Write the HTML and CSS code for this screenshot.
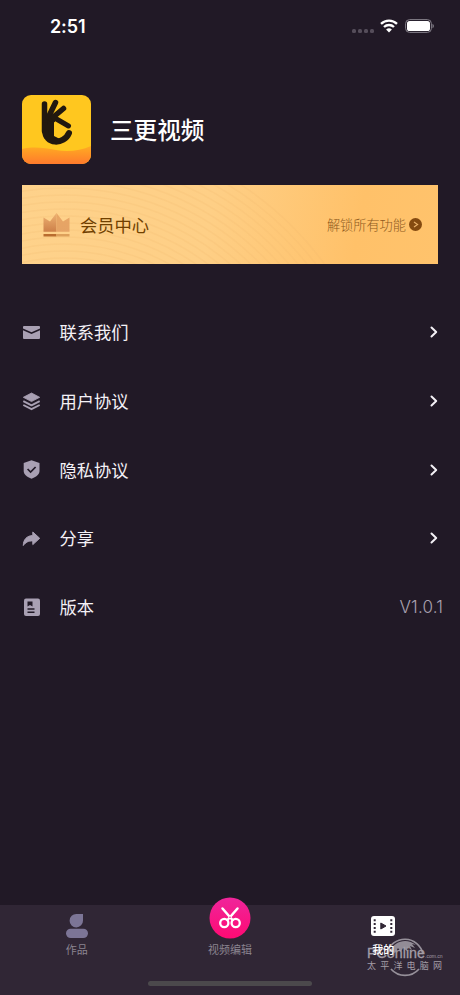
FILE: index.html
```html
<!DOCTYPE html>
<html lang="zh-CN">
<head>
<meta charset="utf-8">
<title>三更视频</title>
<link rel="stylesheet" href="styles.css">
</head>
<body>
<div class="screen">
  <header class="status">
    <span class="time">2:51</span>
    <div class="status-icons">
      <span class="dots"><i></i><i></i><i></i><i></i></span>
      <svg class="wifi" width="18" height="14" viewBox="0 0 18 14" fill="none" stroke="#fff" stroke-width="2.3"><path d="M1 4.800a11.500 11.500 0 0 1 16 0M4 8a7.200 7.200 0 0 1 10 0"/><path d="M9 13.500 6.100 10.600a4.200 4.200 0 0 1 5.800 0z" fill="#fff" stroke="none"/></svg>
      <svg width="29" height="14" viewBox="0 0 29 14"><rect x=".6" y=".6" width="25.8" height="12.8" rx="4" fill="none" stroke="#85808a"/><rect x="2" y="2" width="23" height="10" rx="2.6" fill="#fff"/><path d="M27.500 4.700c1.800.8 1.800 3.800 0 4.600z" fill="#85808a"/></svg>
    </div>
  </header>

  <section class="profile">
    <svg class="logo" width="69" height="69" viewBox="0 0 69 69">
      <defs>
        <linearGradient id="wave" x1="0" y1="0" x2="0" y2="1"><stop stop-color="#ffac22"/><stop offset="1" stop-color="#ff7a2c"/></linearGradient>
        <clipPath id="tile"><rect width="69" height="69" rx="9"/></clipPath>
      </defs>
      <g clip-path="url(#tile)">
        <rect width="69" height="69" fill="#ffc71f"/>
        <path d="M0 54C12 51 23 53 34 55s24 1 35-4v18H0z" fill="url(#wave)"/>
      </g>
      <path d="M20 20h11l3 4-2 5v12l6 3-8 4-8-5z" fill="#21180f"/>
      <g fill="none" stroke="#21180f" stroke-linecap="round" stroke-linejoin="round">
        <path d="M22.500 9V36" stroke-width="5.500"/>
        <path d="M26.500 22 33.500 7.500" stroke-width="5.500"/>
        <path d="M29 24 41.500 13.500" stroke-width="5.500"/>
        <path d="M31 22 46.500 31" stroke-width="5"/>
        <path d="M23 30V35C23 50 42 50 47 38" stroke-width="6"/>
      </g>
      <path d="M32.500 27.500v12.500l12-5.800z" fill="#ffc71f" stroke="#ffc71f" stroke-linejoin="round"/>
    </svg>
    <h1>三更视频</h1>
  </section>

  <section class="vip">
    <svg class="ripples" width="416" height="79" viewBox="0 0 416 79" fill="none" stroke="#eeb96d" stroke-opacity=".2" stroke-width="1.500">
      <circle cx="42" cy="270" r="197"/><circle cx="42" cy="270" r="204"/><circle cx="42" cy="270" r="211"/><circle cx="42" cy="270" r="218"/><circle cx="42" cy="270" r="225"/><circle cx="42" cy="270" r="232"/><circle cx="42" cy="270" r="239"/><circle cx="42" cy="270" r="246"/><circle cx="42" cy="270" r="253"/><circle cx="42" cy="270" r="260"/><circle cx="42" cy="270" r="267"/><circle cx="42" cy="270" r="274"/><circle cx="42" cy="270" r="281"/><circle cx="42" cy="270" r="288"/><circle cx="42" cy="270" r="295"/><circle cx="42" cy="270" r="302"/><circle cx="42" cy="270" r="309"/><circle cx="42" cy="270" r="316"/><circle cx="42" cy="270" r="323"/>
    </svg>
    <svg class="crown" width="27" height="26" viewBox="0 0 27 26">
      <defs><linearGradient id="cl" x1="0" y1="0" x2="0" y2="1"><stop stop-color="#eeb272"/><stop offset="1" stop-color="#cd8049"/></linearGradient><linearGradient id="cr" x1="0" y1="0" x2="0" y2="1"><stop stop-color="#e8a665"/><stop offset="1" stop-color="#e5a365"/></linearGradient></defs>
      <path d="M.5 5.500 7 9.500 13.500 1v18.800H.5z" fill="url(#cl)"/>
      <path d="M13.500 1 20 9.500l6.500-4v14.300h-13z" fill="url(#cr)"/>
      <path d="M.5 22h13v2.500H.5z" fill="#b96d2f"/><path d="M13.500 22h13v2.500h-13z" fill="#dda05b"/>
    </svg>
    <span class="vip-title">会员中心</span>
    <span class="vip-more">解锁所有功能</span>
    <svg class="vip-go" width="13" height="13" viewBox="0 0 13 13"><circle cx="6.500" cy="6.500" r="6.500" fill="#844a10"/><path d="m5 4 3.600 2.500L5 9" fill="none" stroke="#eab169" stroke-width="1.100"/></svg>
  </section>

  <nav class="menu">
    <div class="row">
      <svg width="19" height="19" viewBox="0 0 19 19" fill="#a9a0b3"><path d="M2 3h15a1 1 0 0 1 1 1v1.500L9.500 9.300 1 5.500V4a1 1 0 0 1 1-1z"/><path d="m1 7.200 8.500 3.700L18 7.200V15a1 1 0 0 1-1 1H2a1 1 0 0 1-1-1z"/></svg>
      <span>联系我们</span>
      <svg class="chev" width="8" height="12" viewBox="0 0 8 12"><path d="m1.500 1.500 4.700 4.500-4.700 4.500"/></svg>
    </div>
    <div class="row">
      <svg width="19" height="19" viewBox="0 0 19 19" fill="#a9a0b3"><path d="m9.500 1 8.200 4.300-8.200 4.300-8.200-4.300z" stroke="#a9a0b3" stroke-linejoin="round" stroke-width=".8"/><path d="m1.300 9.200 8.200 4.200 8.200-4.200M1.300 13l8.200 4.200 8.200-4.200" fill="none" stroke="#a9a0b3" stroke-width="1.900" stroke-linejoin="round"/></svg>
      <span>用户协议</span>
      <svg class="chev" width="8" height="12" viewBox="0 0 8 12"><path d="m1.500 1.500 4.700 4.500-4.700 4.500"/></svg>
    </div>
    <div class="row">
      <svg width="19" height="19" viewBox="0 0 19 19"><path d="M9.500.3 17.500 3v8c0 3.500-3.500 6-8 7.700C5 17 1.700 14.500 1.700 11V3z" fill="#a9a0b3"/><path d="m5.600 9 3 3 5-5" fill="none" stroke="#211926" stroke-width="1.700"/></svg>
      <span>隐私协议</span>
      <svg class="chev" width="8" height="12" viewBox="0 0 8 12"><path d="m1.500 1.500 4.700 4.500-4.700 4.500"/></svg>
    </div>
    <div class="row">
      <svg width="19" height="19" viewBox="0 0 19 19"><path d="M10.800 3 17.700 9.300 10.800 15.600V12C6.500 11.500 3.500 13.500 1.300 16.500 1.300 10.500 5 6.700 10.800 6.500z" fill="#a9a0b3" stroke="#a9a0b3" stroke-width="1" stroke-linejoin="round"/></svg>
      <span>分享</span>
      <svg class="chev" width="8" height="12" viewBox="0 0 8 12"><path d="m1.500 1.500 4.700 4.500-4.700 4.500"/></svg>
    </div>
    <div class="row">
      <svg width="19" height="19" viewBox="0 0 19 19"><rect x="2" y=".5" width="16" height="17.500" rx="2" fill="#a9a0b3"/><path d="M5.500 3.500h5v5L8 7 5.500 8.500zM5.500 10.300h7v1.500h-7zM5.500 13.500h7V15h-7z" fill="#211926"/></svg>
      <span>版本</span>
      <span class="version">V1.0.1</span>
    </div>
  </nav>

  <footer class="tabbar">
    <div class="watermark">
      <svg class="globe" width="40" height="40" viewBox="0 0 40 40"><path d="M2 16A18.500 18.500 0 0 1 38 17M6 32A18.500 18.500 0 0 0 34 32" fill="none" stroke="#96909a" stroke-width="1.700"/><path d="M5 14C9 5 21 0 31 8l-4-1 3 4-5-2 2 4-5-3v4l-4-3-2 4-3-4-3 5z" fill="#928c96"/></svg>
      <div class="brand">PConline<small>.com.cn</small></div>
      <div class="brand-cn">太平洋电脑网</div>
    </div>
    <div class="tabs">
      <div class="tab">
        <svg class="tab-icon" width="24" height="26" viewBox="0 0 24 26" fill="#7c7596"><path d="M11.500 1H18v6.500A6.700 6.700 0 1 1 11.500 1z"/><rect x="1" y="15.700" width="22" height="9.300" rx="4.650"/></svg>
        <span>作品</span>
      </div>
      <div class="tab">
        <svg class="tab-icon" width="42" height="42" viewBox="0 0 42 42"><defs><linearGradient id="pink" x1="0" y1="0" x2="0" y2="1"><stop stop-color="#ef259b"/><stop offset="1" stop-color="#ff0a73"/></linearGradient></defs><circle cx="21" cy="21" r="20.500" fill="url(#pink)"/><g fill="none" stroke="#fff" stroke-linecap="round"><path d="m13.500 11.500 10 11.500M28.500 11.500l-10 11.500" stroke-width="2.500"/><circle cx="15.300" cy="26" r="4.100" stroke-width="2.300"/><circle cx="26.700" cy="26" r="4.100" stroke-width="2.300"/></g><circle cx="21" cy="20.300" r=".8" fill="#f51888"/></svg>
        <span>视频编辑</span>
      </div>
      <div class="tab active">
        <svg class="tab-icon" width="24" height="20" viewBox="0 0 24 20"><rect width="24" height="20" rx="3" fill="#fff"/><path d="M3.700 3.300v13.500M20.300 3.300v13.500" stroke="#302635" stroke-width="2" stroke-dasharray="2 1.800"/><path d="M9.800 7v6l5.200-3z" fill="#302635" stroke="#302635" stroke-linejoin="round"/></svg>
        <span>我的</span>
      </div>
    </div>
    <div class="home"></div>
  </footer>
</div>
</body>
</html>
```
FILE: styles.css
```css
* { box-sizing: border-box; }
body {
  margin: 0;
  background: #211926;
  color: #f4f1f6;
  font-family: "Liberation Sans", "Noto Sans CJK SC", sans-serif;
}
svg { display: block; flex: none; }
.screen {
  width: 460px;
  height: 995px;
  display: flex;
  flex-direction: column;
  overflow: hidden;
}
.status {
  height: 95px;
  padding: 15px 26px 0 50px;
  display: flex;
  justify-content: space-between;
  align-items: flex-start;
}
.time {
  font: 600 18px/24px Inter, sans-serif;
  color: #fff;
  letter-spacing: -.1px;
}
.status-icons { display: flex; align-items: center; height: 22px; }
.dots { display: flex; gap: 2px; margin: 10px 6px 0 0; }
.dots i { width: 4px; height: 4px; border-radius: 1.500px; background: #554d5a; }
.wifi { margin-right: 7px; }

.profile { display: flex; align-items: center; padding-left: 22px; height: 69px; }
h1 {
  margin: 2px 0 0 19px;
  font-size: 23.600px;
  line-height: 36px;
  font-weight: 500;
  color: #fff;
}

.vip {
  position: relative;
  margin: 21px 22px 0;
  height: 79px;
  padding: 0 16px 0 21px;
  display: flex;
  align-items: center;
  background: linear-gradient(100deg, #fed28b, #fecf86 45%, #ffc169 80%, #ffc36c);
  overflow: hidden;
}
.ripples { position: absolute; inset: 0; }
.crown, .vip-title, .vip-more, .vip-go { position: relative; }
.vip-title { margin-left: 10px; font-size: 17.300px; color: #704000; }
.vip-more { margin-left: auto; font-size: 13.200px; color: #8e5a20; font-weight: 300; }
.vip-go { margin-left: 3px; }

.menu { margin-top: 34px; }
.row {
  display: flex;
  align-items: center;
  height: 68.700px;
  padding: 0 22px;
  font-size: 17.300px;
}
.row > span:nth-child(2) { margin: -1px 0 0 18.500px; }
.chev { margin-left: auto; fill: none; stroke: #f4f1f6; stroke-width: 2; stroke-linecap: round; stroke-linejoin: round; }
.version {
  margin: 0 -5px 0 auto;
  font-family: Inter, sans-serif;
  font-weight: 300;
  font-size: 17px;
  letter-spacing: .15px;
  color: #a9a1b0;
}

.tabbar {
  position: relative;
  margin-top: auto;
  height: 90px;
  background: #302635;
}
.tabs { position: relative; display: grid; grid-template: 53px / repeat(3, 1fr); }
.tab {
  display: flex;
  flex-direction: column;
  align-items: center;
  justify-content: flex-end;
  font-size: 11px;
  line-height: 16px;
  color: #8b8490;
}
.tab-icon { margin-bottom: 3px; }
.active { color: #fff; font-weight: 500; }
.active .tab-icon { margin-bottom: 6px; }
.home { width: 164px; height: 5px; margin: 23px auto 0; border-radius: 3px; background: #4b494c; }
.watermark { position: absolute; left: 367px; top: 32px; width: 78px; height: 40px; color: #a39da6; }
.globe { position: absolute; left: 18px; top: 0; }
.brand { position: absolute; left: 0; top: 9px; font: 14.300px/15px "Liberation Sans", sans-serif; white-space: nowrap; -webkit-text-stroke: .3px; }
.brand small { font-size: 5px; -webkit-text-stroke: 0; }
.brand-cn { position: absolute; left: 0; top: 23px; font-size: 9px; line-height: 12px; letter-spacing: 4.200px; white-space: nowrap; }
```
